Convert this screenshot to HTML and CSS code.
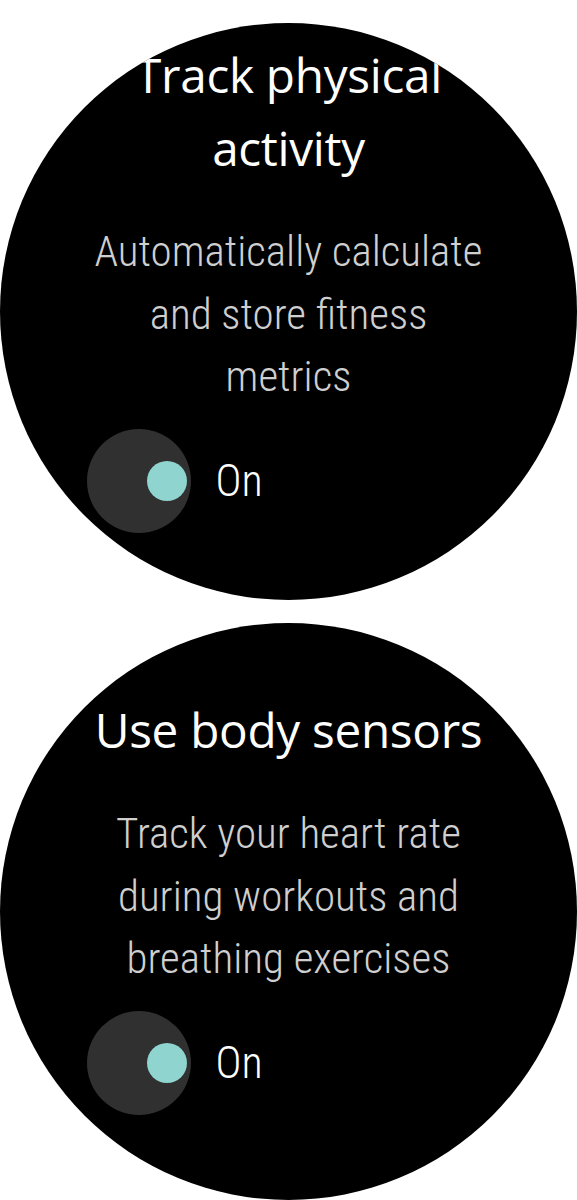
FILE: index.html
```html
<!DOCTYPE html>
<html>
<head>
<meta charset="utf-8">
<link rel="stylesheet" href="styles.css">
</head>
<body>
<div class="screen screen-first">
  <h1 class="title">Track physical activity</h1>
  <p class="desc">Automatically calculate and store fitness metrics</p>
  <div class="toggle-row">
    <div class="toggle"><span class="knob"></span></div>
    <span class="toggle-label">On</span>
  </div>
</div>
<div class="screen screen-second">
  <h1 class="title">Use body sensors</h1>
  <p class="desc">Track your heart rate during workouts and breathing exercises</p>
  <div class="toggle-row">
    <div class="toggle"><span class="knob"></span></div>
    <span class="toggle-label">On</span>
  </div>
</div>
</body>
</html>
```
FILE: styles.css
```css
html, body {
  margin: 0;
  padding: 0;
  background: #ffffff;
}
body {
  display: flex;
  flex-direction: column;
  align-items: center;
  gap: 23px;
  padding-top: 23px;
}
.screen {
  width: 577px;
  height: 577px;
  border-radius: 50%;
  background: #000;
  overflow: hidden;
  display: flex;
  flex-direction: column;
  align-items: center;
  box-sizing: border-box;
  flex-shrink: 0;
}
.screen-first { padding-top: 15px; }
.screen-second { padding-top: 70px; }
.title {
  margin: 0;
  width: 400px;
  text-align: center;
  color: #fff;
  font-family: "Open Sans", sans-serif;
  font-weight: 400;
  font-size: 47.7px;
  line-height: 73px;
  letter-spacing: -0.3px;
}
.desc {
  margin: 36px 0 0;
  width: 410px;
  text-align: center;
  color: #cfcfcf;
  font-family: Roboto, sans-serif;
  font-weight: 300;
  font-stretch: condensed;
  font-size: 43px;
  line-height: 62.5px;
}
.toggle-row {
  margin-top: 21px;
  width: 420px;
  display: flex;
  align-items: center;
  gap: 25px;
  padding-left: 8px;
  box-sizing: border-box;
}
.toggle {
  width: 104px;
  height: 104px;
  border-radius: 50%;
  background: #303030;
  display: flex;
  align-items: center;
  justify-content: flex-end;
  padding-right: 4px;
  box-sizing: border-box;
  flex-shrink: 0;
}
.knob {
  width: 40px;
  height: 40px;
  border-radius: 50%;
  background: #8fd4cf;
}
.toggle-label {
  color: #fff;
  font-family: Roboto, sans-serif;
  font-weight: 300;
  font-stretch: condensed;
  font-size: 44px;
}
```
